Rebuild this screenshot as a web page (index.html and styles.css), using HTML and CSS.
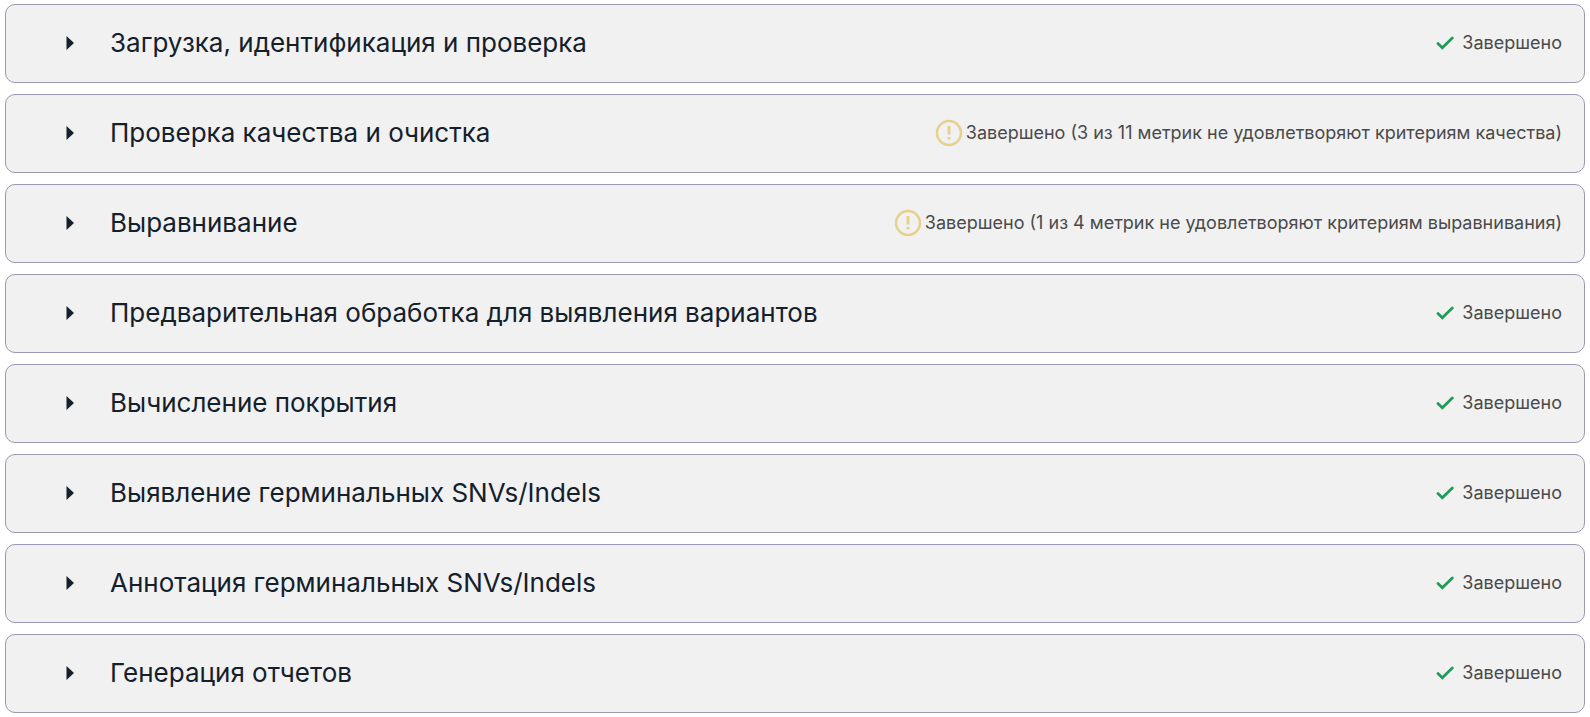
FILE: index.html
```html
<!DOCTYPE html>
<html lang="ru">
<head>
<meta charset="utf-8">
<title>Этапы анализа</title>
<link rel="stylesheet" href="styles.css">
</head>
<body>
<svg class="symbols" aria-hidden="true">
  <symbol id="arrow" viewBox="0 0 8 14"><path d="M0.500 0L8 7L0.500 14Z" fill="#14202b"/></symbol>
  <symbol id="check" viewBox="0 0 18 14"><path d="M2 7.500L6.300 11.800L16.300 2" fill="none" stroke="#1e9c57" stroke-width="2.700" stroke-linecap="round"/></symbol>
  <symbol id="warning" viewBox="0 0 28 28"><circle cx="14" cy="14" r="12" fill="none" stroke="#e5d18c" stroke-width="2.500"/><path d="M14 7V15.500M14 18V20.500" fill="none" stroke="#e5d18c" stroke-width="3"/></symbol>
</svg>
<main class="stages">
  <button class="stage" type="button" aria-expanded="false"><svg class="arrow"><use href="#arrow"/></svg><span class="title">Загрузка, идентификация и проверка</span><span class="status"><svg class="check"><use href="#check"/></svg>Завершено</span></button>
  <button class="stage" type="button" aria-expanded="false"><svg class="arrow"><use href="#arrow"/></svg><span class="title">Проверка качества и очистка</span><span class="status status-warning"><svg class="warning"><use href="#warning"/></svg>Завершено (3 из 11 метрик не удовлетворяют критериям качества)</span></button>
  <button class="stage" type="button" aria-expanded="false"><svg class="arrow"><use href="#arrow"/></svg><span class="title">Выравнивание</span><span class="status status-warning"><svg class="warning"><use href="#warning"/></svg>Завершено (1 из 4 метрик не удовлетворяют критериям выравнивания)</span></button>
  <button class="stage" type="button" aria-expanded="false"><svg class="arrow"><use href="#arrow"/></svg><span class="title">Предварительная обработка для выявления вариантов</span><span class="status"><svg class="check"><use href="#check"/></svg>Завершено</span></button>
  <button class="stage" type="button" aria-expanded="false"><svg class="arrow"><use href="#arrow"/></svg><span class="title">Вычисление покрытия</span><span class="status"><svg class="check"><use href="#check"/></svg>Завершено</span></button>
  <button class="stage" type="button" aria-expanded="false"><svg class="arrow"><use href="#arrow"/></svg><span class="title">Выявление герминальных SNVs/Indels</span><span class="status"><svg class="check"><use href="#check"/></svg>Завершено</span></button>
  <button class="stage" type="button" aria-expanded="false"><svg class="arrow"><use href="#arrow"/></svg><span class="title">Аннотация герминальных SNVs/Indels</span><span class="status"><svg class="check"><use href="#check"/></svg>Завершено</span></button>
  <button class="stage" type="button" aria-expanded="false"><svg class="arrow"><use href="#arrow"/></svg><span class="title">Генерация отчетов</span><span class="status"><svg class="check"><use href="#check"/></svg>Завершено</span></button>
</main>
</body>
</html>
```
FILE: styles.css
```css
* { box-sizing: border-box; }
body { margin: 0; background: #fff; font-family: Inter, "Noto Sans", sans-serif; }
.symbols { position: absolute; width: 0; height: 0; }
.stages { display: flex; flex-direction: column; gap: 11px; padding: 4px 5px; }
.stage { display: flex; align-items: center; width: 100%; min-height: 79px; padding: 0 22px 2px 60px; border: 1px solid #9a98b3; border-radius: 10px; background: #f1f1f1; color: #14202b; font-family: inherit; text-align: left; cursor: pointer; }
.arrow { flex: none; width: 8px; height: 14px; margin-right: 36px; }
.title { flex: 1; font-size: 26px; line-height: 32px; }
.status { display: flex; align-items: center; gap: 8px; color: #4a4a4a; font-size: 18px; line-height: 24px; }
.status-warning { gap: 3px; }
.check { flex: none; width: 18px; height: 14px; }
.warning { flex: none; width: 28px; height: 28px; }
```
